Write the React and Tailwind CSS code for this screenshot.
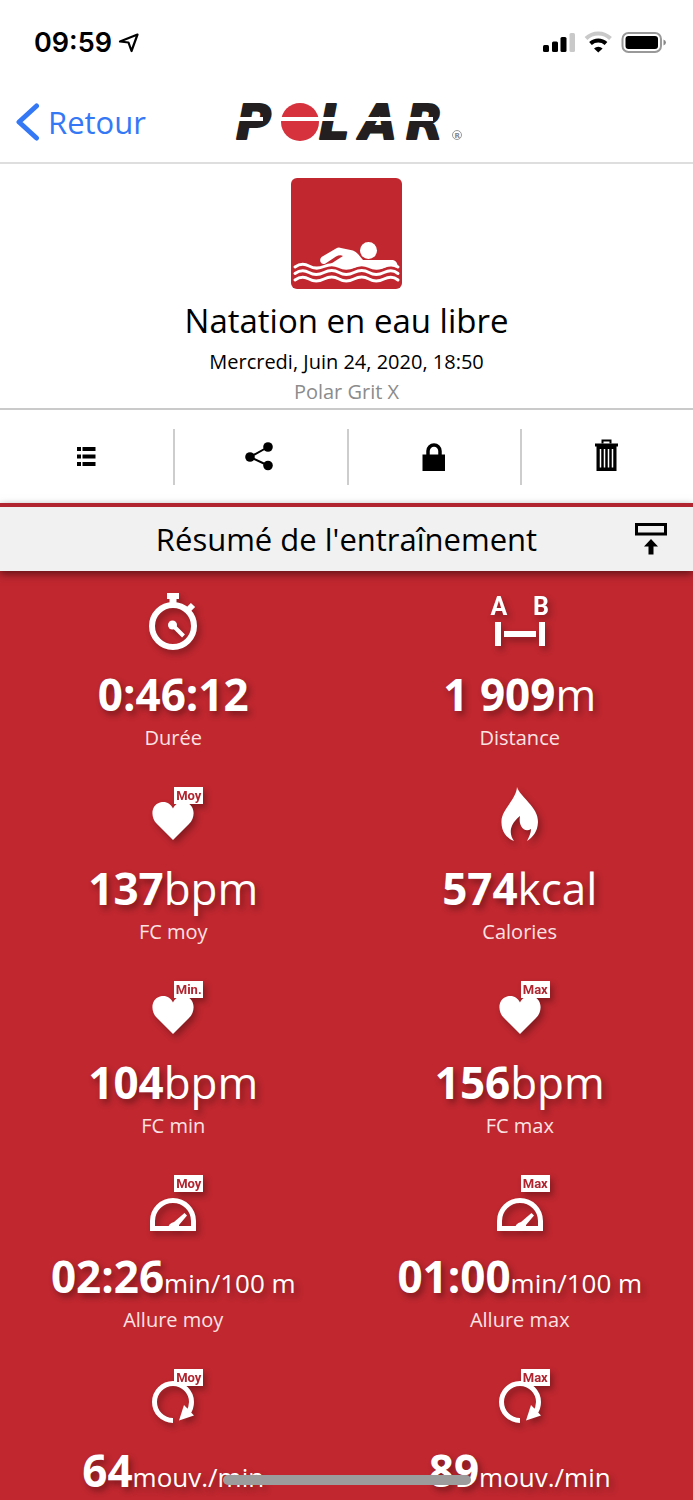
function StatusBar() {
  return (
    <div className="flex h-[82px] items-center justify-between pt-1 pl-[34px] pr-[26px]">
      <div className="flex items-center gap-1.5 font-['Inter',sans-serif] text-[27px] font-semibold leading-8">
        <span>09:59</span>
        <svg width="22" height="22" viewBox="0 0 22 22" fill="none" stroke="#000" strokeWidth="2.200" strokeLinejoin="round">
          <path d="M19.500 2.500L2 9.500L10.500 10.500L13.500 19Z" />
        </svg>
      </div>
      <svg width="124" height="24" viewBox="0 0 124 24">
        <g transform="translate(-543,-31)">
          <rect x="543" y="45" width="6" height="7" rx="1.500" />
          <rect x="552" y="41.500" width="6" height="10.500" rx="1.500" />
          <rect x="560.500" y="37" width="6" height="15" rx="1.500" />
          <rect x="569.500" y="33" width="5.500" height="19" rx="1.500" fill="#c9c9c9" />
          <path d="M586 38.500A17.500 17.500 0 0 1 610.500 38.500" fill="none" stroke="#c9c9c9" strokeWidth="4" />
          <path d="M590.500 43.500A11.500 11.500 0 0 1 606 43.500" fill="none" stroke="#000" strokeWidth="4" />
          <path d="M598.300 52.500L594 48.500A6.500 6.500 0 0 1 602.600 48.500Z" />
          <rect x="622.500" y="33" width="38.500" height="19" rx="6" fill="none" stroke="#999" strokeWidth="2" />
          <rect x="625.500" y="36" width="32.500" height="13" rx="3" />
          <path d="M663.500 39.500Q666 40.500 666 42.500Q666 44.500 663.500 45.500Z" fill="#888" />
        </g>
      </svg>
    </div>
  );
}

function PolarLogo() {
  return (
    <svg
      role="img"
      aria-label="Polar"
      width="236"
      height="64"
      viewBox="0 0 236 64"
      className="font-['DejaVu_Sans',sans-serif] text-[48px] font-bold italic"
    >
      <g fill="#231f20" stroke="#231f20" strokeWidth="2" strokeLinejoin="round">
        <text x="7" y="49">P</text>
        <text x="90" y="49">L</text>
        <text x="131" y="49">A</text>
        <text x="177" y="49">R</text>
      </g>
      <circle cx="71" cy="32" r="19" fill="#d5323e" />
      <path d="M0 27H34V31H0ZM51 27H168V31H51ZM172 27H204V31H172Z" fill="#fff" />
      <circle cx="228" cy="45" r="4.500" fill="none" stroke="#999" />
      <text x="225.500" y="47.500" fill="#888" className="text-[7px] not-italic">R</text>
    </svg>
  );
}

function NavBar() {
  return (
    <nav className="relative flex h-[82px] items-center justify-center border-b-2 border-[#dedede]">
      <a href="#retour" className="absolute left-4 flex items-center gap-[7px] text-[31px] text-[#3478f6]">
        <svg width="25" height="40" viewBox="0 0 25 40" fill="none" stroke="#3478f6" strokeWidth="5" strokeLinecap="round" strokeLinejoin="round">
          <path d="M20.500 4L3 20L20.500 36" />
        </svg>
        Retour
      </a>
      <PolarLogo />
    </nav>
  );
}

function SwimIcon() {
  return (
    <svg width="111" height="111" viewBox="0 0 111 111" className="rounded-md bg-[#c0272f]">
      <circle cx="77.500" cy="72.500" r="8.500" fill="#fff" />
      <path
        d="M30.500 79L45 70.500Q47.500 69 50 70L62 72.500Q65 73.500 67 76L72 82H102Q106 82.500 107 89Q100 86 93 90Q86 93 78 89Q70 86 63 90Q56 92 48 88L38 87L52 78Q49 76.500 45 78.500L34.500 85.500Q31 87 29.500 84Q28.500 81 30.500 79Z"
        fill="#fff"
      />
      <g fill="none" stroke="#fff" strokeWidth="3" strokeLinecap="round">
        <path d="M4 89Q11 84 18 88T33 88.500T48 88.500T63 88.500T78 88.500T93 88.500T107 89" />
        <path d="M4 95.500Q11 90.500 18 94.500T33 94.500T48 94.500T63 94.500T78 94.500T93 94.500T107 95.500" />
        <path d="M4 102Q11 97 18 101T33 101T48 101T63 101T78 101T93 101T107 102" />
      </g>
    </svg>
  );
}

function SessionHeader() {
  return (
    <header className="flex flex-col items-center border-b-2 border-[#cacaca] pt-[14px] pb-px text-center">
      <SwimIcon />
      <h1 className="mt-2 text-[33px] leading-[48px]">Natation en eau libre</h1>
      <p className="mt-0.5 text-[20px] leading-[30px]">Mercredi, Juin 24, 2020, 18:50</p>
      <p className="text-[20px] leading-[30px] text-[#8c8c8c]">Polar Grit X</p>
    </header>
  );
}

const actions = [
  {
    name: 'Détails',
    icon: <path d="M7 8h4v4H7zM12.500 8h13v4h-13zM7 15.500h4v4H7zM12.500 15.500h13v4h-13zM7 23h4v4H7zM12.500 23h13v4h-13z" />,
  },
  {
    name: 'Partager',
    icon: (
      <>
        <path d="M25 8L7 18L25 26.500" fill="none" stroke="#000" strokeWidth="2" />
        <circle cx="25" cy="8" r="4.800" />
        <circle cx="7" cy="18" r="4.800" />
        <circle cx="25" cy="26.500" r="4.800" />
      </>
    ),
  },
  {
    name: 'Verrouiller',
    icon: (
      <>
        <path d="M6.500 15.500h22.500V32H6.500z" />
        <path d="M12 16V12A6 6 0 0 1 24 12V16" fill="none" stroke="#000" strokeWidth="3.500" />
      </>
    ),
  },
  {
    name: 'Supprimer',
    icon: (
      <>
        <path d="M6 4.500H29V7.500H27.500V32H7.500V7.500H6Z" />
        <path d="M13.500 4.500V1.500H21.500V4.500" fill="none" stroke="#000" strokeWidth="2" />
        <path d="M11.500 10V28.500M15.500 10V28.500M19.500 10V28.500M23.500 10V28.500" stroke="#fff" strokeWidth="1.500" />
      </>
    ),
  },
];

function Toolbar() {
  return (
    <div className="grid grid-cols-4 pt-[19px] pb-[18px]">
      {actions.map((action) => (
        <button
          key={action.name}
          type="button"
          aria-label={action.name}
          className="flex h-14 items-center justify-center border-l-2 border-[#cdcdcd] first:border-transparent"
        >
          <svg width="36" height="36" viewBox="0 0 36 36">
            {action.icon}
          </svg>
        </button>
      ))}
    </div>
  );
}

function SectionTitle() {
  return (
    <div className="relative z-10 flex h-[68px] items-center justify-center border-t-4 border-[#b0252f] bg-[#f1f1f1] shadow-[0_3px_8px_rgba(0,0,0,0.5)]">
      <h2 className="text-[31px] leading-[46px]">Résumé de l'entraînement</h2>
      <button type="button" aria-label="Réduire" className="absolute right-[26px]">
        <svg width="32" height="32" viewBox="0 0 32 32">
          <path d="M1.500 1.500H30.500V11H1.500Z" fill="none" stroke="#000" strokeWidth="3" />
          <path d="M16 16L23 23.500H18.500V31.500H13.500V23.500H9Z" />
        </svg>
      </button>
    </div>
  );
}

const icons = {
  stopwatch: (
    <g fill="none" stroke="#fff">
      <circle cx="30" cy="33" r="21" strokeWidth="6" />
      <path d="M24 3H36" strokeWidth="6" />
      <path d="M30 3V12" strokeWidth="7" />
      <path d="M45 17L50 12" strokeWidth="6" />
      <path d="M29.500 32L40.500 43" strokeWidth="4" />
      <circle cx="29.500" cy="32" r="4.500" fill="#fff" stroke="none" />
    </g>
  ),
  distance: (
    <g className="font-['Roboto',sans-serif] text-[25px] font-bold" fill="#fff" textAnchor="middle">
      <text x="9" y="22">A</text>
      <text x="51" y="22">B</text>
      <path d="M5 29h6v24H5zM14 38h32v6H14zM49 29h6v24h-6z" />
    </g>
  ),
  heart: (
    <path
      d="M30 53L14 37C7 30 8 18 17 15.500C23 14 27.500 16.500 30 21.500C32.500 16.500 37 14 43 15.500C52 18 53 30 46 37Z"
      fill="#fff"
    />
  ),
  flame: (
    <path
      d="M27 0C30 10 48.500 20 48 35C47.500 45 43 50 37 54C39 50 41 46 41 42C35 46 28 40 30 29C25 33 16 42 24 54C16 51 11 44 11.500 34C12 22 26 13 27 0Z"
      fill="#fff"
    />
  ),
  gauge: (
    <g>
      <path d="M9.500 53.500V46A20.500 20.500 0 0 1 50.500 46V53.500Z" fill="none" stroke="#fff" strokeWidth="5" />
      <path d="M25 54Q25 48.500 31 47L41.500 38L44 40.500L36 50V54Z" fill="#fff" />
    </g>
  ),
  cadence: (
    <g>
      <path d="M30 51.500A18.500 18.500 0 1 1 48.500 33Q48.500 39 45 44" fill="none" stroke="#fff" strokeWidth="5" />
      <path d="M41 36L51 46.500L36 51.500Z" fill="#fff" />
    </g>
  ),
};

const stats = [
  { label: 'Durée', value: '0:46:12', icon: 'stopwatch' },
  { label: 'Distance', value: '1 909', unit: 'm', icon: 'distance' },
  { label: 'FC moy', value: '137', unit: 'bpm', icon: 'heart', badge: 'Moy' },
  { label: 'Calories', value: '574', unit: 'kcal', icon: 'flame' },
  { label: 'FC min', value: '104', unit: 'bpm', icon: 'heart', badge: 'Min.' },
  { label: 'FC max', value: '156', unit: 'bpm', icon: 'heart', badge: 'Max' },
  { label: 'Allure moy', value: '02:26', smallUnit: 'min/100 m', icon: 'gauge', badge: 'Moy' },
  { label: 'Allure max', value: '01:00', smallUnit: 'min/100 m', icon: 'gauge', badge: 'Max' },
  { value: '64', smallUnit: 'mouv./min', icon: 'cadence', badge: 'Moy' },
  { value: '89', smallUnit: 'mouv./min', icon: 'cadence', badge: 'Max' },
];

function Stat({ stat }) {
  return (
    <div className="flex flex-col items-center">
      <div className="relative drop-shadow-[3px_4px_3px_rgba(0,0,0,0.3)]">
        <svg width="60" height="60" viewBox="0 0 60 60">
          {icons[stat.icon]}
        </svg>
        {stat.badge && (
          <span className="absolute top-0 right-0 flex h-[17px] w-[29px] items-center justify-center bg-white font-['Roboto',sans-serif] text-[13px] font-bold leading-none text-[#b0252f]">
            {stat.badge}
          </span>
        )}
      </div>
      <p className="mt-[11px] text-[44px] leading-[60px] [text-shadow:3px_4px_6px_rgba(0,0,0,0.35)]">
        <span className="font-bold">{stat.value}</span>
        {stat.unit && <span>{stat.unit}</span>}
        {stat.smallUnit && <span className="text-[26px] leading-none">{stat.smallUnit}</span>}
      </p>
      {stat.label && <p className="text-[20px] leading-7 text-[#fbe3e4]">{stat.label}</p>}
    </div>
  );
}

function App() {
  return (
    <div className="min-h-screen bg-[#c0272f] font-['Open_Sans','Noto_Sans',sans-serif] text-black">
      <div className="bg-white">
        <StatusBar />
        <NavBar />
        <SessionHeader />
        <Toolbar />
      </div>
      <SectionTitle />
      <main className="grid grid-cols-2 gap-y-[35px] pt-[22px] text-white">
        {stats.map((stat, i) => (
          <Stat key={i} stat={stat} />
        ))}
      </main>
      <div className="fixed bottom-[15px] left-1/2 z-20 h-[10px] w-[248px] -translate-x-1/2 rounded-full bg-[#9c9c9c]" />
    </div>
  );
}

export default App;
